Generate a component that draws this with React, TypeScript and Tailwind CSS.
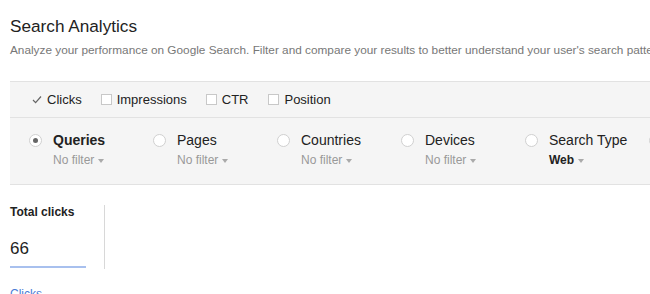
import React from "react"

const font = { fontFamily: '"Liberation Sans", Arial, sans-serif' }

const Check = () => (
  <svg width="10" height="9" viewBox="0 0 10 9" className="mr-[5px]">
    <path d="M1 5 L3.6 7.6 L9 1.5" fill="none" stroke="#666" strokeWidth="1.2" />
  </svg>
)

const Box = () => (
  <span className="mr-[5px] inline-block h-[11px] w-[11px] border border-[#c8c8c8] bg-white" />
)

const Caret = () => (
  <span className="ml-[4px] inline-block h-0 w-0 border-x-[3px] border-t-[4px] border-x-transparent border-t-[#aaa] align-middle" />
)

const dims = [
  { label: "Queries", sub: "No filter", on: true },
  { label: "Pages", sub: "No filter" },
  { label: "Countries", sub: "No filter" },
  { label: "Devices", sub: "No filter" },
  { label: "Search Type", sub: "Web", bold: true },
  { label: "Dates", sub: "No filter" },
]

export default function App() {
  return (
    <div className="h-[294px] w-[650px] overflow-hidden bg-white" style={font}>
      <div className="px-[10px] pt-[15px]">
        <h1 className="text-[17.2px] leading-[22px] text-[#222]">Search Analytics</h1>
        <p className="mt-[6px] whitespace-nowrap text-[11.8px] leading-[15px] text-[#777]">
          Analyze your performance on Google Search. Filter and compare your results to better understand your user's search patterns.
        </p>
      </div>

      <div className="ml-[10px] mt-[23px] w-[700px] border-y border-[#e2e2e2] bg-[#f5f5f5]">
        {/* metrics */}
        <div className="flex h-[36px] items-center border-b border-[#e2e2e2] pl-[22px] text-[13px] text-[#222]">
          <span className="mr-[19px] flex items-center">
            <Check />
            Clicks
          </span>
          <span className="mr-[19px] flex items-center">
            <Box />
            Impressions
          </span>
          <span className="mr-[20px] flex items-center">
            <Box />
            CTR
          </span>
          <span className="flex items-center">
            <Box />
            Position
          </span>
        </div>

        {/* dimensions */}
        <div className="flex h-[66px] pl-[19px] pt-[14px]">
          {dims.map((d) => (
            <div key={d.label} className="flex w-[124px] flex-none">
              <span className="mt-[2px] flex h-[13px] w-[13px] flex-none items-center justify-center rounded-full border border-[#d0d0d0] bg-white">
                {d.on && <span className="h-[5px] w-[5px] rounded-full bg-[#666]" />}
              </span>
              <div className="ml-[11px]">
                <div className={`whitespace-nowrap text-[14px] leading-[17px] text-[#222] ${d.on ? "font-bold" : ""}`}>{d.label}</div>
                <div
                  className={`mt-[4px] flex items-center whitespace-nowrap text-[12px] leading-[15px] ${
                    d.bold ? "font-bold text-[#222]" : "text-[#999]"
                  }`}
                >
                  {d.sub}
                  <Caret />
                </div>
              </div>
            </div>
          ))}
        </div>
      </div>

      <div className="flex px-[10px] pt-[20px]">
        <div className="w-[95px] border-r border-[#d8d8d8]">
          <div className="text-[12px] font-bold leading-[15px] text-[#222]">Total clicks</div>
          <div className="mt-[19px] text-[17px] leading-[20px] text-[#222]">66</div>
          <div className="mb-[1px] mt-[7px] h-[2px] w-[76px] bg-[#a8c0ee]" />
        </div>
      </div>

      <div className="mt-[18px] px-[10px] text-[12px] leading-[15px] text-[#4a7bd6]">Clicks</div>
    </div>
  )
}
